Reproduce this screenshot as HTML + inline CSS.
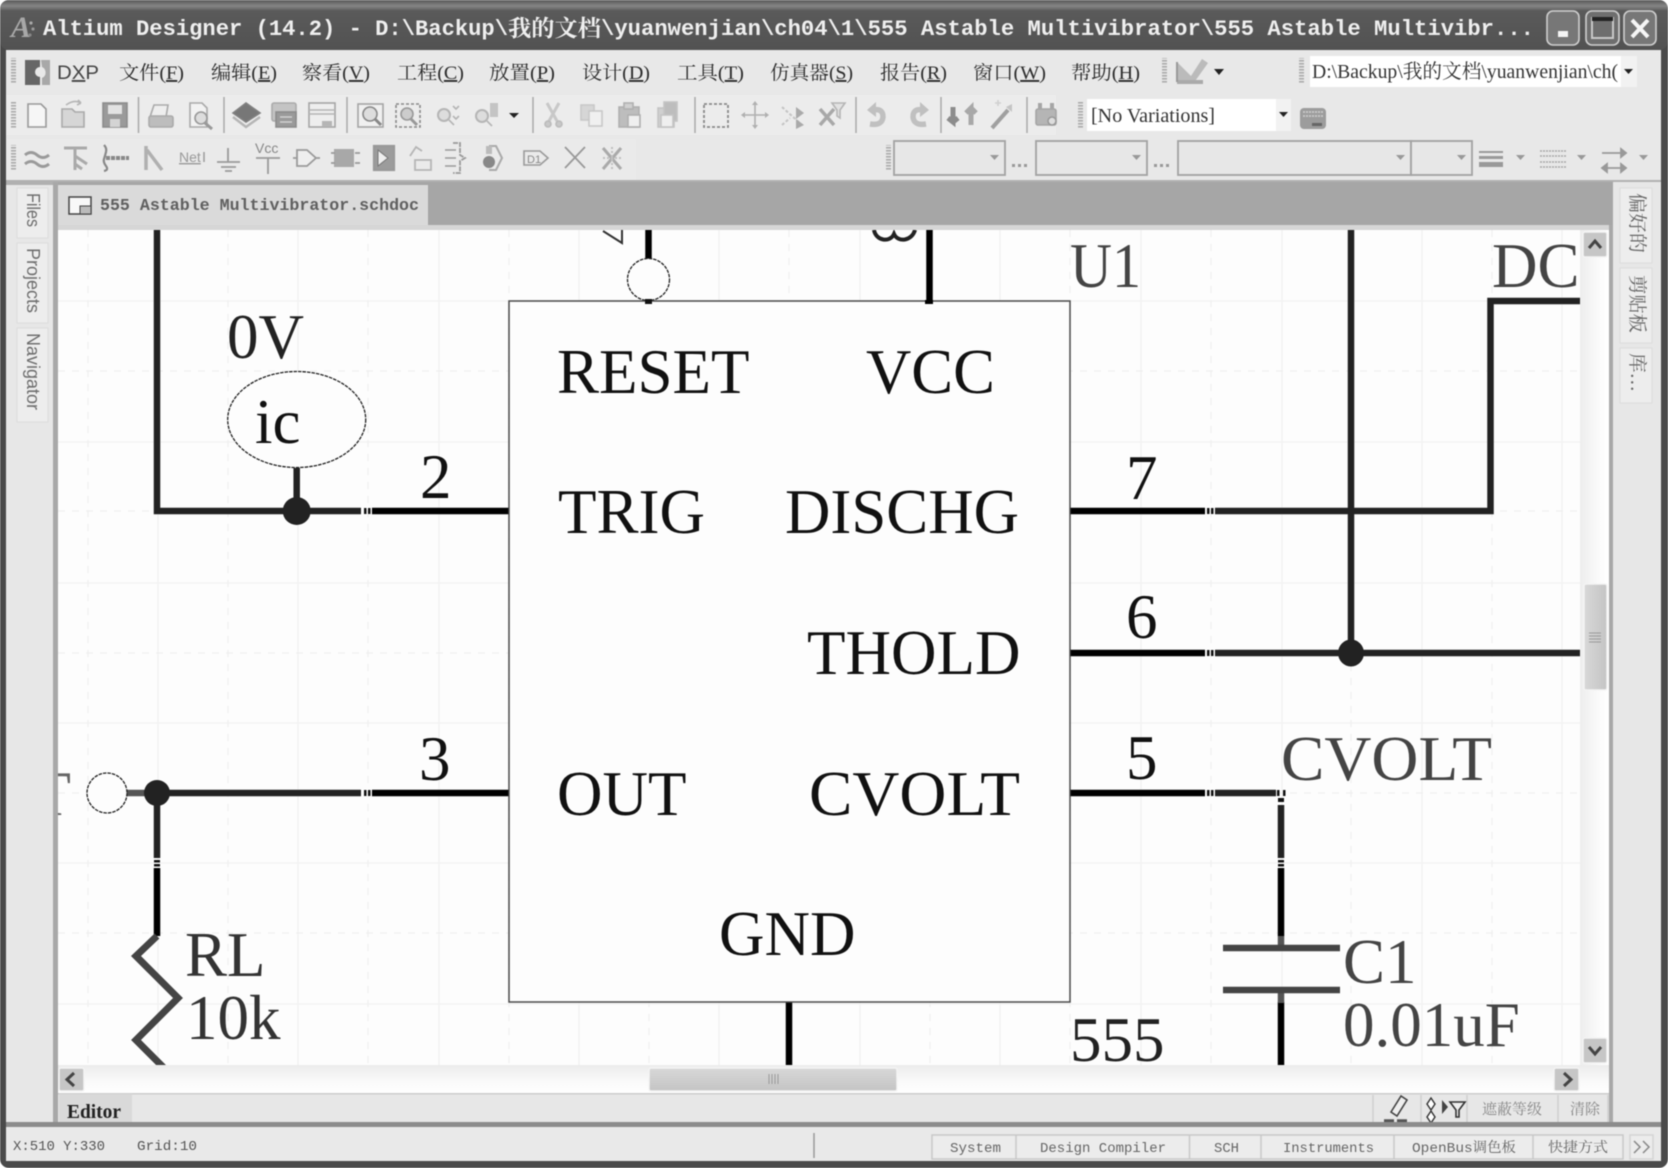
<!DOCTYPE html>
<html lang="zh"><head><meta charset="utf-8"><title>Altium Designer</title>
<style>
html,body{margin:0;padding:0;background:#fff;width:1668px;height:1168px;overflow:hidden}
svg{display:block;filter:blur(.55px)}
.sf{font-family:"Liberation Serif","Noto Serif CJK SC",serif}
.ss{font-family:"Liberation Sans","Noto Sans CJK SC",sans-serif}
.mn{font-family:"Liberation Mono","Noto Serif CJK SC",monospace}
.m{font-size:19px;fill:#2c2c2c}
.l{font-size:63px;fill:#111}
.g{font-size:63px;fill:#444}
.s{font-size:14px;fill:#666}
</style></head><body>
<svg xmlns="http://www.w3.org/2000/svg" width="1668" height="1168" viewBox="0 0 1668 1168" class="sf">
<defs>
<linearGradient id="tb" x1="0" y1="0" x2="0" y2="1"><stop offset="0" stop-color="#585858"/><stop offset=".12" stop-color="#858585"/><stop offset=".22" stop-color="#5a5a5a"/><stop offset="1" stop-color="#525252"/></linearGradient>
<linearGradient id="vs" x1="0" y1="0" x2="1" y2="0"><stop offset="0" stop-color="#ededed"/><stop offset=".6" stop-color="#fafafa"/><stop offset="1" stop-color="#fff"/></linearGradient>
<linearGradient id="hs" x1="0" y1="0" x2="0" y2="1"><stop offset="0" stop-color="#ececec"/><stop offset=".6" stop-color="#fafafa"/><stop offset="1" stop-color="#fff"/></linearGradient>
<linearGradient id="th" x1="0" y1="0" x2="0" y2="1"><stop offset="0" stop-color="#d8d8d8"/><stop offset="1" stop-color="#c4c4c4"/></linearGradient>
<linearGradient id="tv" x1="0" y1="0" x2="1" y2="0"><stop offset="0" stop-color="#d8d8d8"/><stop offset="1" stop-color="#c4c4c4"/></linearGradient>
<clipPath id="cv"><rect x="58" y="230" width="1522" height="835"/></clipPath>
<pattern id="grip" width="10" height="3" patternUnits="userSpaceOnUse"><rect width="10" height="1.6" fill="#aaa"/></pattern>
</defs>

<!-- window frame -->
<rect width="1668" height="1168" fill="#fff"/>
<rect width="1668" height="1168" rx="9" fill="#4a4a4a"/>
<rect x="0" y="0" width="1668" height="50" rx="9" fill="url(#tb)"/>
<rect x="6" y="50" width="1655" height="1111" fill="#e8e8e8"/>

<!-- title text -->
<text x="11" y="37" font-size="30" font-weight="bold" font-style="italic" fill="#a8a8a8">A</text>
<circle cx="31" cy="23" r="1.6" fill="#aaa"/><circle cx="33" cy="29" r="1.6" fill="#999"/><circle cx="30" cy="35" r="1.6" fill="#888"/>
<text class="mn" x="43" y="35" font-size="22" font-weight="bold" fill="#efefef" textLength="465" lengthAdjust="spacingAndGlyphs">Altium Designer (14.2) - D:\Backup\</text>
<text x="508" y="36" font-size="23" font-weight="bold" fill="#efefef" font-family="'Noto Serif CJK SC',serif" textLength="93" lengthAdjust="spacingAndGlyphs">我的文档</text>
<text class="mn" x="601" y="35" font-size="22" font-weight="bold" fill="#efefef" textLength="933" lengthAdjust="spacingAndGlyphs">\yuanwenjian\ch04\1\555 Astable Multivibrator\555 Astable Multivibr...</text>
<!-- title buttons -->
<rect x="1547" y="11" width="32" height="34" rx="6" fill="#777" stroke="#cfcfcf" stroke-width="1.6"/>
<rect x="1586" y="11" width="33" height="34" rx="6" fill="#6e6e6e" stroke="#cfcfcf" stroke-width="1.6"/>
<rect x="1624" y="11" width="32" height="34" rx="6" fill="#777" stroke="#cfcfcf" stroke-width="1.6"/>
<rect x="1558" y="31" width="10" height="6" fill="#f4f4f4"/>
<rect x="1592" y="18" width="21" height="20" fill="none" stroke="#c8c8c8" stroke-width="2"/><rect x="1592" y="17" width="21" height="4" fill="#222"/>
<path d="M1632 20l16 17M1648 20l-16 17" stroke="#f6f6f6" stroke-width="4" fill="none"/>

<!-- bands -->
<rect x="6" y="92" width="1655" height="45" fill="#e8e8e8"/>
<rect x="6" y="95" width="1050" height="40" fill="#ececec"/>
<rect x="6" y="139" width="630" height="41" fill="#eaeaea"/>
<rect x="6" y="180" width="1655" height="2" fill="#b0b0b0"/>
<rect x="6" y="182" width="1607" height="43" fill="#a6a6a6"/>
<!-- grips -->
<rect x="11" y="58" width="5" height="26" fill="url(#grip)"/>
<rect x="11" y="102" width="5" height="26" fill="url(#grip)"/>
<rect x="11" y="145" width="5" height="26" fill="url(#grip)"/>
<rect x="1078" y="102" width="5" height="26" fill="url(#grip)"/>
<rect x="1162" y="58" width="5" height="26" fill="url(#grip)"/>
<rect x="1299" y="58" width="5" height="26" fill="url(#grip)"/>
<rect x="886" y="145" width="5" height="26" fill="url(#grip)"/>

<!-- menu -->
<path d="M25 60h15v7a5 5 0 0 0 0 10v8H25z" fill="#666"/><path d="M41 60h9v25h-8v-7a6 6 0 0 0 0-11z" fill="#a8a8a8"/>
<text class="ss m" x="57" y="79" textLength="42" lengthAdjust="spacingAndGlyphs" font-size="21" style="fill:#444">D<tspan text-decoration="underline">X</tspan>P</text>
<text class="m" x="119" y="79" textLength="65" lengthAdjust="spacingAndGlyphs">文件(<tspan text-decoration="underline">F</tspan>)</text>
<text class="m" x="211" y="79" textLength="66" lengthAdjust="spacingAndGlyphs">编辑(<tspan text-decoration="underline">E</tspan>)</text>
<text class="m" x="302" y="79" textLength="68" lengthAdjust="spacingAndGlyphs">察看(<tspan text-decoration="underline">V</tspan>)</text>
<text class="m" x="397" y="79" textLength="67" lengthAdjust="spacingAndGlyphs">工程(<tspan text-decoration="underline">C</tspan>)</text>
<text class="m" x="489" y="79" textLength="66" lengthAdjust="spacingAndGlyphs">放置(<tspan text-decoration="underline">P</tspan>)</text>
<text class="m" x="582" y="79" textLength="68" lengthAdjust="spacingAndGlyphs">设计(<tspan text-decoration="underline">D</tspan>)</text>
<text class="m" x="677" y="79" textLength="67" lengthAdjust="spacingAndGlyphs">工具(<tspan text-decoration="underline">T</tspan>)</text>
<text class="m" x="770" y="79" textLength="83" lengthAdjust="spacingAndGlyphs">仿真器(<tspan text-decoration="underline">S</tspan>)</text>
<text class="m" x="880" y="79" textLength="67" lengthAdjust="spacingAndGlyphs">报告(<tspan text-decoration="underline">R</tspan>)</text>
<text class="m" x="973" y="79" textLength="73" lengthAdjust="spacingAndGlyphs">窗口(<tspan text-decoration="underline">W</tspan>)</text>
<text class="m" x="1071" y="79" textLength="69" lengthAdjust="spacingAndGlyphs">帮助(<tspan text-decoration="underline">H</tspan>)</text>
<!-- ruler icon -->
<path d="M1177 62l14 14 11-17 6 4-15 21h-16z" fill="#bbb"/><rect x="1177" y="80" width="26" height="4" fill="#aaa"/><path d="M1177 62v20" stroke="#999" stroke-width="2"/>
<path d="M1214 69h10l-5 6z" fill="#222"/>
<!-- path box -->
<rect x="1310" y="56" width="327" height="31" fill="#fff"/><rect x="1621" y="56" width="16" height="31" fill="#f2f2f2"/>
<path d="M1624 69h9l-4.500 5z" fill="#222"/>
<text x="1312" y="78" font-size="20" fill="#333" textLength="306" lengthAdjust="spacingAndGlyphs">D:\Backup\我的文档\yuanwenjian\ch(</text>

<!-- row 2 -->
<g fill="none" stroke="#8a8a8a" stroke-width="1.600" transform="translate(0,115)">
 <path d="M28-11H41l5 5V12H28z" fill="#f6f6f6" stroke="#999"/>
 <path d="M62 12V-6H72l3 3H84V12z" fill="#d6d6d6" stroke="#aaa"/><path d="M66-10q8-6 15-2m0 0l-3-3m3 3l-4 2" stroke="#b5b5b5"/>
 <rect x="103" y="-12" width="24" height="24" fill="#9a9a9a" stroke="#8c8c8c"/><rect x="108" y="-10" width="14" height="9" fill="#e2e2e2" stroke="none"/><rect x="110" y="4" width="10" height="8" fill="#d4d4d4" stroke="none"/>
 <path d="M150 2l4-12h14l-2 12" fill="#eee" stroke="#aaa"/><rect x="149" y="1" width="24" height="11" rx="2" fill="#bdbdbd" stroke="#aaa"/>
 <path d="M190-12h12l5 5V12H190z" fill="#f2f2f2" stroke="#aaa"/><circle cx="201" cy="3" r="6" fill="#ddd" stroke="#999"/><path d="M205 8l7 6" stroke="#999" stroke-width="3"/>
 <path d="M233-2l13-10 14 10-14 9z" fill="#777" stroke="#808080"/><path d="M233 2l13 10 14-10" stroke="#b5b5b5" stroke-width="2.500"/>
 <rect x="272" y="-12" width="24" height="18" rx="2" fill="#c4c4c4" stroke="#aaa"/><rect x="276" y="-3" width="20" height="15" fill="#9a9a9a" stroke="#8c8c8c"/><path d="M280 2h12M280 7h12" stroke="#d0d0d0"/>
 <rect x="309" y="-12" width="26" height="24" fill="#eee" stroke="#a5a5a5"/><path d="M309-5h26M309-1h26" stroke="#b5b5b5"/><rect x="322" y="6" width="10" height="5" fill="#b5b5b5" stroke="none"/>
 <rect x="358" y="-11" width="25" height="23" fill="#f0f0f0" stroke="#a5a5a5"/><circle cx="370" cy="-1" r="7" fill="#ddd" stroke="#888"/><path d="M375 4l6 6" stroke="#888" stroke-width="3"/>
 <rect x="396" y="-11" width="24" height="23" stroke-dasharray="3 2" stroke="#888"/><circle cx="407" cy="-1" r="6" fill="#ccc" stroke="#999"/><path d="M411 4l6 6" stroke="#999" stroke-width="3"/>
 <circle cx="444" cy="0" r="6" fill="#ddd" stroke="#b5b5b5" stroke-width="2"/><path d="M449 5l5 5M453-9l3 3 3-3M453 1l3 3 3-3" stroke="#b5b5b5"/>
 <circle cx="482" cy="1" r="6" fill="#ddd" stroke="#b5b5b5" stroke-width="2"/><path d="M487 6l5 5" stroke="#b5b5b5"/><path d="M490-12h8v14h-8z" fill="#c4c4c4" stroke="none"/>
 <path d="M509-2h10l-5 5z" fill="#222" stroke="none"/>
 <g stroke="#c8c8c8" stroke-width="3"><path d="M547-12l10 18M559-12L549 6"/></g><circle cx="548" cy="9" r="3" fill="#c8c8c8" stroke="#bbb"/><circle cx="559" cy="9" r="3" fill="#c8c8c8" stroke="#bbb"/>
 <rect x="581" y="-10" width="13" height="15" fill="#d6d6d6" stroke="#c8c8c8"/><rect x="589" y="-4" width="13" height="15" fill="#f0f0f0" stroke="#c8c8c8"/>
 <rect x="619" y="-8" width="20" height="20" fill="#bdbdbd" stroke="#b0b0b0"/><rect x="624" y="-12" width="9" height="6" fill="#d0d0d0" stroke="#b0b0b0"/><rect x="628" y="0" width="12" height="12" fill="#efefef" stroke="#b0b0b0"/>
 <rect x="658" y="-7" width="16" height="19" fill="#d0d0d0" stroke="#c4c4c4"/><rect x="664" y="-13" width="13" height="19" fill="#bdbdbd" stroke="#c4c4c4"/><rect x="661" y="0" width="12" height="12" fill="#efefef" stroke="#c4c4c4"/>
 <rect x="704" y="-11" width="24" height="23" stroke="#888" stroke-dasharray="3 2" stroke-width="1.800"/>
 <path d="M744 0h22M755-11v22" stroke="#b0b0b0"/><path d="M741 0l4-3v6zM769 0l-4-3v6zM755-14l-3 4h6zM755 14l-3-4h6z" fill="#b0b0b0" stroke="none"/>
 <path d="M782-8l20 18M782 10l8-7" stroke="#c4c4c4" stroke-dasharray="3 2" stroke-width="2"/><path d="M796-8l8 6-8 6z" fill="#aaa" stroke="none"/><path d="M796 4l8 6-8 4z" fill="#aaa" stroke="none"/>
 <path d="M820-6l14 16M834-6L820 10" stroke="#a8a8a8" stroke-width="3.500"/><path d="M832-12h13l-5 7v8l-3-2v-6z" fill="#e2e2e2" stroke="#b5b5b5"/>
 <path d="M870 9q12 2 13-7q0-9-10-7" stroke="#c0c0c0" stroke-width="5.500"/><path d="M876-13l-9 8 9 7z" fill="#c0c0c0" stroke="none"/>
 <path d="M926 9q-12 2-13-7q0-9 10-7" stroke="#c0c0c0" stroke-width="5.500"/><path d="M920-13l9 8-9 7z" fill="#c0c0c0" stroke="none"/>
 <path d="M953-8v15l-5-4m5 4l5-4" stroke="#8c8c8c" stroke-width="5"/><path d="M971 10v-17l-5 5m5-5l5 5" stroke="#a8a8a8" stroke-width="5"/>
 <path d="M992 13l16-18" stroke="#a0a0a0" stroke-width="4"/><path d="M1006-8l6-3v8z" fill="#c4c4c4" stroke="none"/><path d="M995-12h6M998-15v6" stroke="#d0d0d0"/>
 <rect x="1036" y="-6" width="20" height="16" rx="2" fill="#b5b5b5" stroke="#a5a5a5"/><path d="M1040-12v6M1052-12v6" stroke="#a5a5a5" stroke-width="4"/><circle cx="1052" cy="6" r="4" fill="#ddd" stroke="#999"/>
</g>
<!-- row 2 separators -->
<g stroke="#a8a8a8" stroke-width="1.500">
<path d="M138.500 97v36M224 97v36M347 97v36M533 97v36M695 97v36M856 97v36M941 97v36M1027 97v36"/>
</g>
<!-- no variations -->
<rect x="1087" y="99" width="204" height="32" fill="#fff"/><rect x="1276" y="99" width="15" height="32" fill="#f2f2f2"/>
<path d="M1279 112h9l-4.500 5z" fill="#222"/>
<text x="1091" y="122" font-size="20" fill="#333" textLength="124" lengthAdjust="spacingAndGlyphs">[No Variations]</text>
<rect x="1300" y="108" width="26" height="21" rx="4" fill="#9c9c9c"/><path d="M1303 112h20M1303 116h20" stroke="#c4c4c4" stroke-width="2" stroke-dasharray="2 1"/><rect x="1312" y="123" width="10" height="3" fill="#666"/>

<!-- row 3 -->
<g fill="none" stroke="#9a9a9a" stroke-width="2.200" transform="translate(0,158)" font-family="'Liberation Sans',sans-serif">
 <path d="M25-3q6-5 12 0t12 0M25 6q6-5 12 0t12 0" stroke-width="3"/>
 <path d="M64-10H87M75-10V12M75-2l12 8M75 6l7 5" stroke-width="3" stroke="#aaa"/>
 <path d="M104-13q3 3 2 7t-2 7 2 7-2 5" stroke="#888"/><path d="M106 0h23" stroke="#888" stroke-width="4" stroke-dasharray="4 1"/>
 <path d="M146-12v24M147-8l15 20" stroke="#b0b0b0" stroke-width="3.500"/>
 <text x="179" y="4" font-size="14" fill="#999" stroke="none" text-decoration="underline">Net</text><path d="M204-6v10" stroke-width="1.500"/>
 <path d="M228-10V4M217 4h23M221 9h15M225 13h7" stroke-width="1.800"/>
 <text x="255" y="-5" font-size="14" fill="#888" stroke="none">Vcc</text><path d="M256 0h24M268 0v16" stroke-width="1.800"/>
 <path d="M293 0h4M297-8h10l9 8-9 8h-10z M316 0h4" stroke-width="1.800" fill="#eee"/>
 <rect x="334" y="-9" width="20" height="18" fill="#a8a8a8" stroke="none"/><path d="M331-5h4M331 5h4M355-5h5M355 5h5" stroke-width="1.800"/>
 <rect x="374" y="-12" width="20" height="24" fill="#9c9c9c" stroke="#999"/><path d="M378-8l10 8-10 8z" fill="#eee" stroke="#777" stroke-width="1"/>
 <path d="M410-2l6-9 6 4M415 12v-10h16v10z" stroke="#b5b5b5" stroke-width="1.800"/>
 <path d="M445-8h11M445 0h11M445 8h11" stroke-width="1.500"/><path d="M453-15h7v12l5 3-5 3v12h-7" stroke-width="1.800" stroke-dasharray="5 1"/>
 <circle cx="489" cy="4" r="6" fill="#888" stroke="none"/><path d="M489-12h7l6 12-6 12h-7" stroke="#aaa" stroke-width="2"/><rect x="486" y="-12" width="6" height="8" fill="#bbb" stroke="none"/>
 <path d="M524-7h16l8 7-8 7h-16z" stroke-width="1.600"/><text x="527" y="5" font-size="11" fill="#888" stroke="none">D1</text>
 <path d="M565-11l20 21M585-11L565 10" stroke="#999" stroke-width="1.800"/>
 <path d="M603-10l18 21M621-10L603 11" stroke="#aaa" stroke-width="3"/><path d="M612-11v22M603 0h18" stroke="#c0c0c0" stroke-width="2" stroke-dasharray="2 2"/>
</g>
<!-- combos -->
<g fill="#e7e7e7" stroke="#a2a2a2" stroke-width="1.800">
<rect x="894" y="141" width="111" height="34"/><rect x="1036" y="141" width="111" height="34"/><rect x="1178" y="141" width="233" height="34"/><rect x="1411" y="141" width="61" height="34"/>
</g>
<g fill="#999"><path d="M990 155h9l-4.500 5zM1132 155h9l-4.500 5zM1396 155h9l-4.500 5zM1457 155h9l-4.500 5zM1516 155h9l-4.500 5zM1577 155h9l-4.500 5zM1639 155h9l-4.500 5z"/>
<rect x="1012" y="164" width="3" height="3"/><rect x="1018" y="164" width="3" height="3"/><rect x="1024" y="164" width="3" height="3"/>
<rect x="1154" y="164" width="3" height="3"/><rect x="1160" y="164" width="3" height="3"/><rect x="1166" y="164" width="3" height="3"/></g>
<g fill="#999"><rect x="1479" y="151" width="24" height="2"/><rect x="1479" y="156" width="24" height="3"/><rect x="1479" y="162" width="24" height="5"/></g>
<path d="M1540 151h26M1540 156h26M1540 162h26M1540 167h26" stroke="#a8a8a8" stroke-width="1.600" stroke-dasharray="2 1" fill="none"/>
<path d="M1602 153h24M1626 153l-5-4v8zM1602 168h24M1602 168l5-4v8zM1626 168l-5-4v8z" stroke="#999" stroke-width="1.800" fill="#999"/>

<!-- left sidebar -->
<rect x="6" y="182" width="47" height="940" fill="#e7e7e7"/>
<rect x="53" y="182" width="5" height="940" fill="#a8a8a8"/>
<rect x="6" y="182" width="47" height="3" fill="#b0b0b0"/>
<g fill="#ededed" stroke="#dcdcdc" stroke-width="1"><rect x="17" y="188" width="31" height="50"/><rect x="17" y="243" width="31" height="80"/><rect x="17" y="328" width="31" height="94"/></g>
<g class="ss" font-size="18" fill="#6e6e6e">
<text transform="translate(27,193) rotate(90)" textLength="34" lengthAdjust="spacingAndGlyphs">Files</text>
<text transform="translate(27,248) rotate(90)" textLength="65" lengthAdjust="spacingAndGlyphs">Projects</text>
<text transform="translate(27,333) rotate(90)" textLength="77" lengthAdjust="spacingAndGlyphs">Navigator</text>
</g>
<!-- right sidebar -->
<rect x="1613" y="182" width="48" height="940" fill="#e7e7e7"/>
<rect x="1609" y="225" width="4" height="897" fill="#a8a8a8"/>
<g fill="#ededed" stroke="#dcdcdc" stroke-width="1"><rect x="1620" y="188" width="32" height="75"/><rect x="1620" y="268" width="32" height="75"/><rect x="1620" y="348" width="32" height="55"/></g>
<g font-size="19" fill="#666" font-family="'Noto Serif CJK SC',serif">
<text transform="translate(1631,193) rotate(90)" textLength="60" lengthAdjust="spacingAndGlyphs">偏好的</text>
<text transform="translate(1631,275) rotate(90)" textLength="58" lengthAdjust="spacingAndGlyphs">剪贴板</text>
<text transform="translate(1631,353) rotate(90)" textLength="39" lengthAdjust="spacingAndGlyphs">库...</text>
</g>

<!-- tab -->
<rect x="58" y="185" width="370" height="45" fill="#dadada"/>
<rect x="58" y="225" width="1551" height="5" fill="#d6d6d6"/>
<rect x="69" y="197" width="22" height="17" fill="#f8f8f8" stroke="#444" stroke-width="1.500"/><rect x="80" y="206" width="11" height="8" fill="#bbb" stroke="#444" stroke-width="1"/>
<text class="mn" x="100" y="210" font-size="16.500" font-weight="bold" fill="#606060" textLength="319" lengthAdjust="spacingAndGlyphs">555 Astable Multivibrator.schdoc</text>

<!-- canvas -->
<rect x="58" y="230" width="1551" height="863" fill="#fdfdfd"/>
<g clip-path="url(#cv)" fill="none">
 <g stroke="#f2f2f2" stroke-width="1.300">
  <path d="M158 230v835M298 230v835M439 230v835M579 230v835M719 230v835M860 230v835M1000 230v835M1141 230v835M1282 230v835M1422 230v835M1562 230v835"/>
  <path d="M58 301h1522M58 442h1522M58 583h1522M58 723h1522M58 863h1522M58 1004h1522"/>
 </g>
 <g stroke="#f0f0f0" stroke-width="1.300" stroke-dasharray="7 7">
  <path d="M88 230v835M228 230v835M368 230v835M509 230v835M649 230v835M789 230v835M930 230v835M1070 230v835M1211 230v835M1351 230v835M1492 230v835"/>
  <path d="M58 371h1522M58 511h1522M58 653h1522M58 793h1522M58 933h1522"/>
 </g>
 <!-- clipped glyph fragments -->
 <path d="M603 231l19 12v-13" stroke="#333" stroke-width="2"/>
 <path d="M874 230C876 241 890 243 894 234C898 243 912 241 915 230" stroke="#222" stroke-width="4"/>
 <!-- wires -->
 <g stroke="#222" stroke-width="6.500" stroke-linejoin="miter">
  <path d="M157 230V511H361"/>
  <path d="M296.700 468V511"/>
  <path d="M1215 511H1490.500V301H1581"/>
  <path d="M1351 230V653"/>
  <path d="M1215 653H1581"/>
  <path d="M157 793H361"/>
  <path d="M157 793V858"/>
  <path d="M1215 793H1276"/>
  <path d="M1281 805V858"/>
 </g>
 <!-- pins -->
 <g stroke="#000" stroke-width="6.500">
  <path d="M648.500 230V260M929.500 230V304M789 1002V1065"/>
  <path d="M372 511H512M372 793H512M1070 511H1205M1070 653H1205M1070 793H1205"/>
  <path d="M157 868V936M1281 868V936M1281 1002V1065"/>
 </g>
 <g fill="#111" stroke="none">
  <rect x="364" y="508" width="2.500" height="6"/><rect x="368" y="508" width="2.500" height="6"/>
  <rect x="364" y="790" width="2.500" height="6"/><rect x="368" y="790" width="2.500" height="6"/>
  <rect x="1207" y="508" width="2.500" height="6"/><rect x="1211" y="508" width="2.500" height="6"/>
  <rect x="1207" y="650" width="2.500" height="6"/><rect x="1211" y="650" width="2.500" height="6"/>
  <rect x="1207" y="790" width="2.500" height="6"/><rect x="1211" y="790" width="2.500" height="6"/>
  <rect x="154" y="860" width="6" height="2.500"/><rect x="154" y="864" width="6" height="2.500"/>
  <rect x="1278" y="860" width="6" height="2.500"/><rect x="1278" y="864" width="6" height="2.500"/>
  <rect x="1278" y="798" width="6" height="4"/><rect x="1277" y="790" width="2.500" height="6"/><rect x="1283" y="790" width="2.500" height="6"/>
 </g>
 <path d="M127 793H150" stroke="#555" stroke-width="6.500"/>
 <path d="M1281 936V948M1281 990V1003" stroke="#555" stroke-width="6.500"/>
 <path d="M1223 948H1340M1223 990H1340" stroke="#444" stroke-width="6.500"/>
 <path d="M157 936L136 956L178 998L136 1040L165 1069" stroke="#444" stroke-width="7"/>
 <!-- junctions -->
 <g fill="#222"><circle cx="296.700" cy="511" r="14"/><circle cx="157" cy="793" r="13"/><ellipse cx="1351" cy="653" rx="13" ry="13.500"/></g>
 <!-- circles -->
 <g stroke="#222" stroke-width="1.300" stroke-dasharray="3.500 1" fill="#fdfdfd">
  <ellipse cx="296.700" cy="419.500" rx="69" ry="48"/>
  <circle cx="648.500" cy="279.500" r="21"/>
  <circle cx="107" cy="793" r="20"/>
 </g>
 <rect x="645" y="299" width="7" height="5" fill="#111"/>
 <!-- IC body -->
 <rect x="509" y="301" width="561" height="701" fill="#fdfdfd" stroke="#4a4a4a" stroke-width="1.500"/>
 <rect x="925" y="300" width="8" height="4" fill="#000"/><rect x="645" y="300" width="7" height="4" fill="#111"/>
 <!-- labels -->
 <g class="sf">
  <text class="l" x="557" y="393">RESET</text>
  <text class="l" x="866" y="393" textLength="129" lengthAdjust="spacingAndGlyphs">VCC</text>
  <text class="l" x="558" y="533">TRIG</text>
  <text class="l" x="785" y="533" textLength="234" lengthAdjust="spacingAndGlyphs">DISCHG</text>
  <text class="l" x="807" y="674">THOLD</text>
  <text class="l" x="557" y="815">OUT</text>
  <text class="l" x="809" y="815" textLength="211" lengthAdjust="spacingAndGlyphs">CVOLT</text>
  <text class="l" x="719" y="955">GND</text>
  <text class="l" x="227" y="358" style="fill:#222">0V</text>
  <text class="l" x="255" y="443">ic</text>
  <text class="l" x="420" y="498">2</text>
  <text class="l" x="419" y="780">3</text>
  <text class="l" x="1126" y="499">7</text>
  <text class="l" x="1126" y="638">6</text>
  <text class="l" x="1126" y="779">5</text>
  <text class="g" x="1070" y="287" textLength="71" lengthAdjust="spacingAndGlyphs">U1</text>
  <text class="g" x="1492" y="287">DC</text>
  <text class="g" x="1281" y="780" textLength="211" lengthAdjust="spacingAndGlyphs">CVOLT</text>
  <text class="g" x="1343" y="983">C1</text>
  <text class="g" x="1343" y="1046">0.01uF</text>
  <text class="l" x="1070" y="1061" style="fill:#222">555</text>
  <text class="g" x="185" y="976" style="fill:#333">RL</text>
  <text class="g" x="186" y="1039" style="fill:#333">10k</text>
  <text class="g" x="71" y="815" text-anchor="end" style="fill:#666">T</text>
 </g>
</g>

<!-- scrollbars -->
<rect x="1580" y="230" width="29" height="835" fill="url(#vs)"/>
<rect x="58" y="1065" width="1551" height="28" fill="url(#hs)"/>
<g stroke="#f4f4f4" stroke-width="1.500">
 <rect x="1583" y="232" width="24" height="25" rx="2" fill="#c6c6c6"/>
 <rect x="1583" y="1038" width="24" height="25" rx="2" fill="#c6c6c6"/>
 <rect x="1584" y="584" width="23" height="106" rx="2" fill="url(#tv)"/>
 <rect x="59" y="1068" width="25" height="23" rx="2" fill="#c6c6c6"/>
 <rect x="1554" y="1068" width="25" height="23" rx="2" fill="#c6c6c6"/>
 <rect x="649" y="1068" width="248" height="23" rx="2" fill="url(#th)"/>
</g>
<g fill="none" stroke="#444" stroke-width="3">
 <path d="M1589 248l6-7 6 7M1589 1047l6 7 6-7M74 1073l-7 6.500 7 6.500M1564 1073l7 6.500-7 6.500"/>
</g>
<path d="M1589 633h12M1589 636h12M1589 639h12M1589 642h12M769 1074v10M772 1074v10M775 1074v10M778 1074v10" stroke="#999" stroke-width="1"/>

<!-- editor bar -->
<rect x="58" y="1093" width="1551" height="29" fill="#e7e7e7"/>
<rect x="58" y="1093" width="1551" height="1.500" fill="#cdcdcd"/>
<rect x="59" y="1094" width="73" height="28" fill="#d9d9d9"/>
<text x="67" y="1118" font-size="20" font-weight="bold" fill="#222" textLength="54" lengthAdjust="spacingAndGlyphs">Editor</text>
<g stroke="#cfcfcf" stroke-width="1.500"><path d="M1373 1095v27M1421 1095v27M1467 1095v27M1558 1095v27M1608 1095v27"/></g>
<path d="M1391 1112l10-16 6 4-10 16z" fill="#eee" stroke="#444" stroke-width="1.600"/><path d="M1384 1121h10M1397 1121h10" stroke="#555" stroke-width="3.500"/>
<path d="M1431 1098l4 6-4 6-4-6zM1431 1111l4 6-4 6-4-6z" fill="#fff" stroke="#333" stroke-width="1.400"/>
<path d="M1442 1100l6 7-6 7z" fill="#444"/><path d="M1450 1102h15l-6 8v7h-3v-7z" fill="#eee" stroke="#333" stroke-width="1.600"/>
<text x="1482" y="1114" font-size="15" fill="#888" font-family="'Noto Serif CJK SC',serif" textLength="60" lengthAdjust="spacingAndGlyphs">遮蔽等级</text>
<text x="1570" y="1114" font-size="15" fill="#888" font-family="'Noto Serif CJK SC',serif" textLength="30" lengthAdjust="spacingAndGlyphs">清除</text>

<!-- status bar -->
<rect x="6" y="1122" width="1655" height="5" fill="#8c8c8c"/>
<rect x="6" y="1127" width="1655" height="34" fill="#e9e9e9"/>
<text class="mn s" x="13" y="1150" textLength="92" lengthAdjust="spacingAndGlyphs" style="fill:#555">X:510 Y:330</text>
<text class="mn s" x="137" y="1150" textLength="60" lengthAdjust="spacingAndGlyphs" style="fill:#555">Grid:10</text>
<path d="M814 1133v25" stroke="#999" stroke-width="1.500"/>
<rect x="932" y="1135" width="691" height="24" fill="#ececec" stroke="#c8c8c8" stroke-width="1.500"/>
<rect x="1630" y="1135" width="23" height="24" fill="#ececec" stroke="#d4d4d4" stroke-width="1.500"/>
<path d="M1016 1135v24M1189.500 1135v24M1261 1135v24M1394 1135v24M1533 1135v24" stroke="#c8c8c8" stroke-width="1.500"/>
<g class="mn s">
<text x="950" y="1152" textLength="51" lengthAdjust="spacingAndGlyphs">System</text>
<text x="1040" y="1152" textLength="126" lengthAdjust="spacingAndGlyphs">Design Compiler</text>
<text x="1214" y="1152" textLength="25" lengthAdjust="spacingAndGlyphs">SCH</text>
<text x="1283" y="1152" textLength="91" lengthAdjust="spacingAndGlyphs">Instruments</text>
<text x="1412" y="1152" textLength="104" lengthAdjust="spacingAndGlyphs">OpenBus调色板</text>
<text x="1548" y="1152" textLength="60" lengthAdjust="spacingAndGlyphs">快捷方式</text>
</g>
<path d="M1634 1141l6 6-6 6M1643 1141l6 6-6 6" stroke="#888" stroke-width="1.500" fill="none"/>
</svg>
</body></html>
